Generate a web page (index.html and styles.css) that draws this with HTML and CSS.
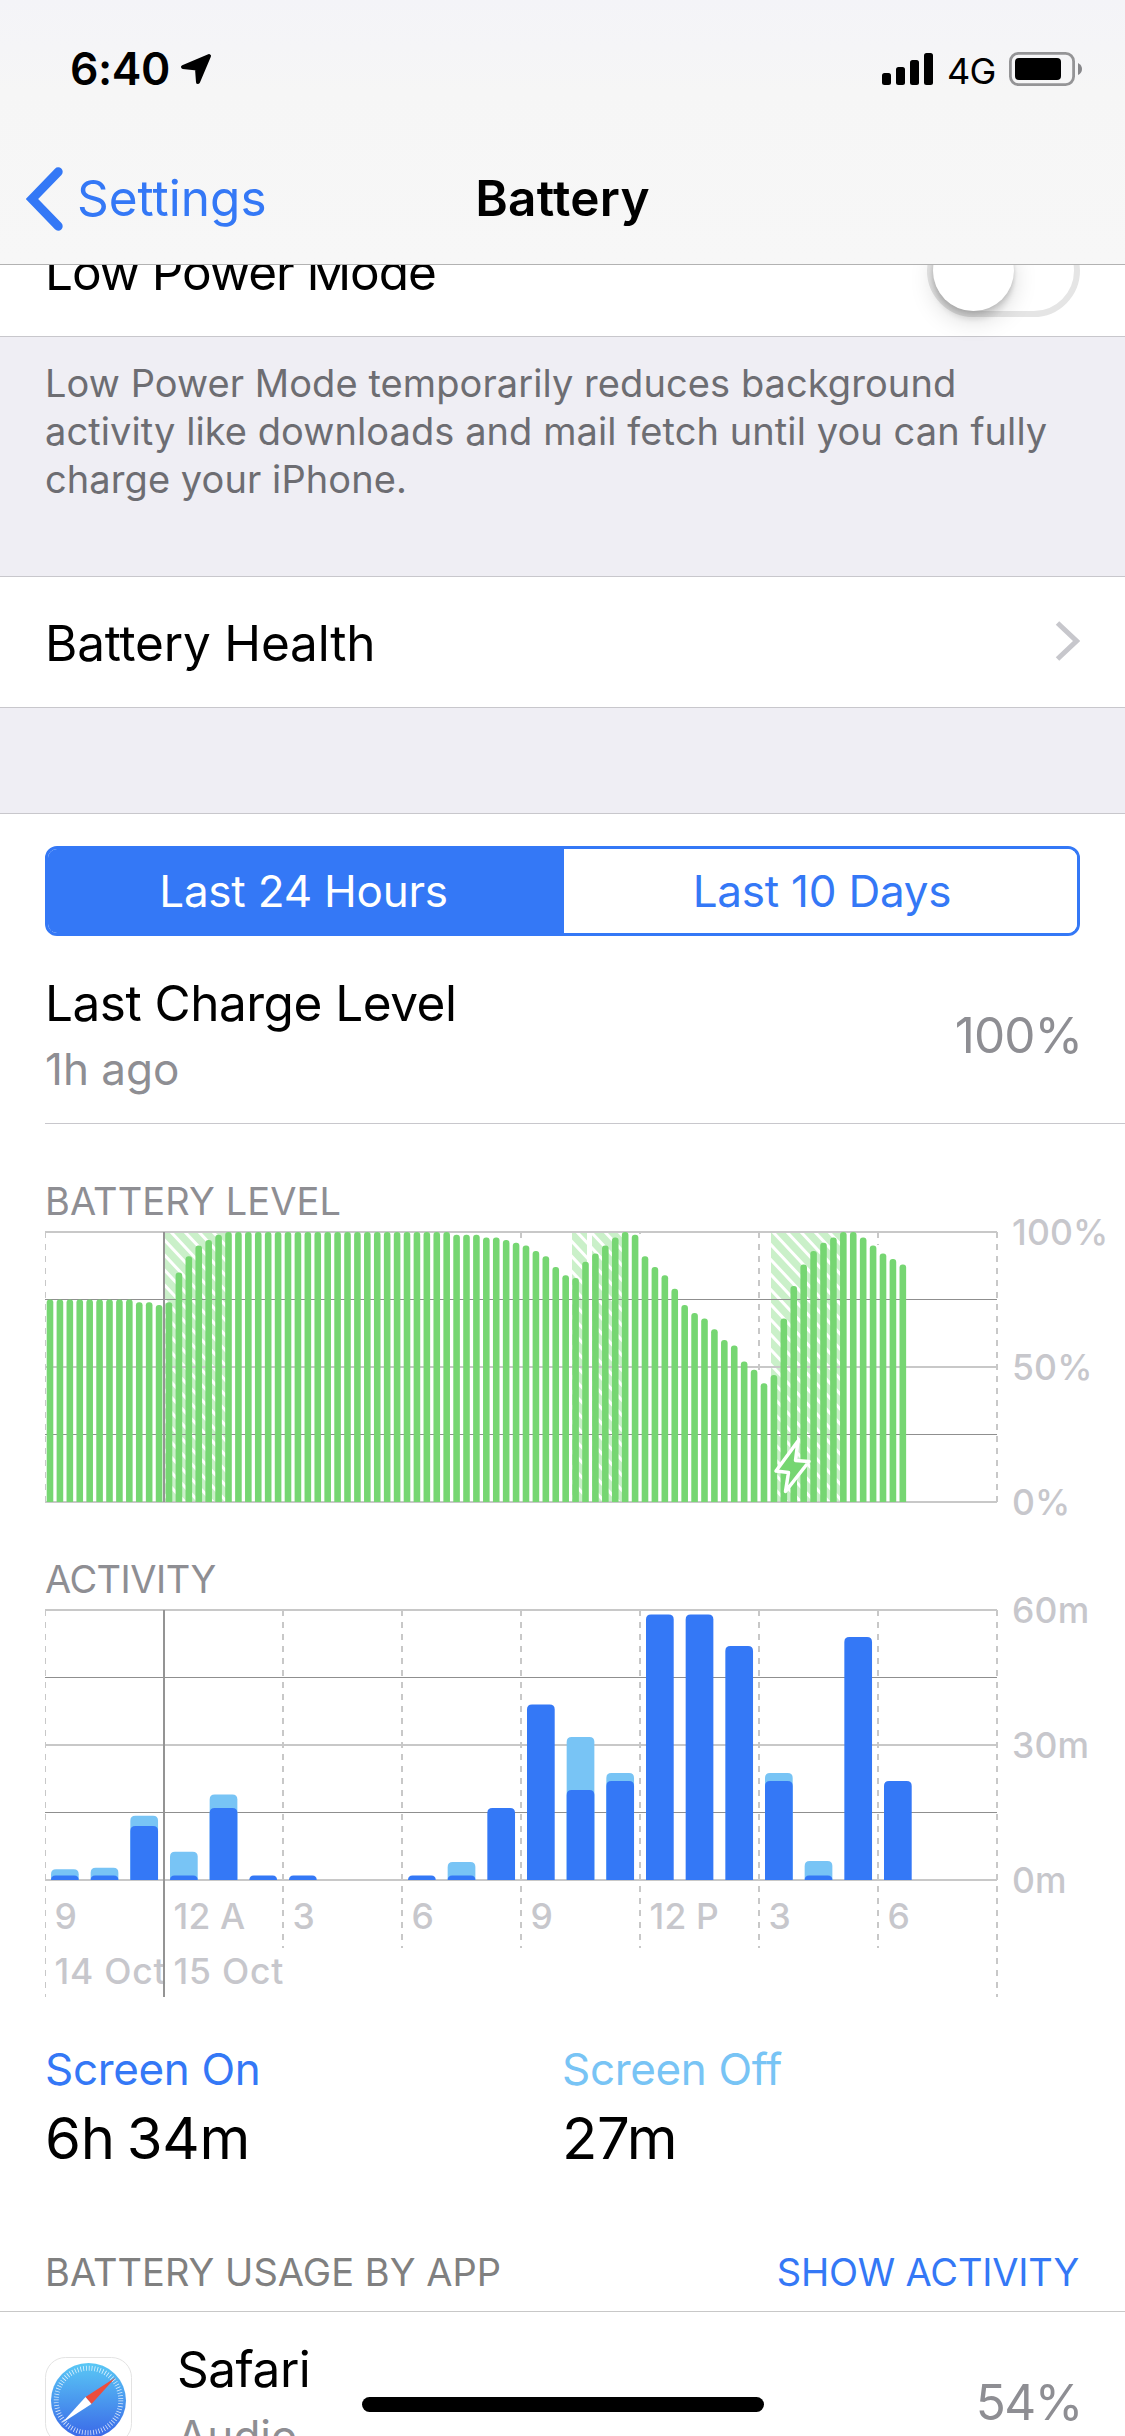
FILE: index.html
```html
<!DOCTYPE html>
<html lang="en">
<head>
    <meta charset="UTF-8">
    <meta name="viewport" content="width=device-width, initial-scale=1.0">
    <title>Battery</title>
    <link rel="stylesheet" href="styles.css">
</head>
<body>
    <header class="header">
        <div class="status-bar">
            <span class="time">6:40</span>
            <svg class="location" width="32" height="32" viewBox="0 0 32 32">
                <path d="M29 3 L3 14 L17 15.5 L18 29 Z" stroke="#000" stroke-width="4" stroke-linejoin="round" />
            </svg>
            <svg class="signal" width="51" height="32" viewBox="0 0 51 32">
                <rect x="0" y="20" width="9" height="12" rx="2.5" />
                <rect x="14" y="14" width="9" height="18" rx="2.5" />
                <rect x="28" y="7" width="9" height="25" rx="2.5" />
                <rect x="42" y="0" width="9" height="32" rx="2.5" />
            </svg>
            <span class="network">4G</span>
            <svg class="battery" width="74" height="34" viewBox="0 0 74 34">
                <rect x="1.4" y="1.4" width="63.2" height="31.2" rx="8" fill="none" stroke="#949496" stroke-width="2.8" />
                <rect x="6" y="6" width="46" height="22" rx="4" />
                <path d="M69 11 Q73 13 73 17 Q73 21 69 23 Z" fill="#87878a" />
            </svg>
        </div>
        <nav class="nav-bar">
            <a class="back">
                <svg width="37" height="64" viewBox="0 0 37 64">
                    <path d="M32.2 4.8 L6 32 L32.2 59.2" fill="none" stroke="#3478f6" stroke-width="9" stroke-linecap="round" />
                </svg>
                <span>Settings</span>
            </a>
            <h1>Battery</h1>
        </nav>
    </header>

    <main>
        <div class="row power-row">
            <span class="label">Low Power Mode</span>
            <div class="toggle"><div class="knob"></div></div>
        </div>
        <p class="footnote">Low Power Mode temporarily reduces background<br>activity like downloads and mail fetch until you can fully<br>charge your iPhone.</p>

        <div class="row health-row">
            <span class="label">Battery Health</span>
            <svg class="chevron" width="25" height="40" viewBox="0 0 25 40">
                <path d="M2.5 2 L21.5 20 L2.5 38" fill="none" stroke="#c7c7cc" stroke-width="5" />
            </svg>
        </div>

        <section class="usage">
            <div class="segmented">
                <button class="active">Last 24 Hours</button>
                <button>Last 10 Days</button>
            </div>

            <div class="charge">
                <div>
                    <div class="label">Last Charge Level</div>
                    <div class="sub">1h ago</div>
                </div>
                <span class="value">100%</span>
            </div>

            <h2 class="level-title">BATTERY LEVEL</h2>
            <svg class="chart" id="levelChart" width="1080" height="300" viewBox="0 -7 1080 300">
                <defs>
                    <pattern id="hatch" width="14" height="15" patternUnits="userSpaceOnUse">
                        <rect width="14" height="15" fill="#caf0c9" />
                        <path d="M-7 -7.5 L21 22.5 M-7 7.5 L7 22.5 M7 -7.5 L21 7.5" stroke="#fff" stroke-width="3" />
                    </pattern>
                </defs>
            </svg>

            <h2 class="activity-title">ACTIVITY</h2>
            <svg class="chart" id="activityChart" width="1080" height="400" viewBox="0 -7 1080 400"></svg>

            <div class="totals">
                <div class="total on">
                    <div class="name">Screen On</div>
                    <div class="amount">6h 34m</div>
                </div>
                <div class="total off">
                    <div class="name">Screen Off</div>
                    <div class="amount">27m</div>
                </div>
            </div>

            <div class="apps-header">
                <span>BATTERY USAGE BY APP</span>
                <a>SHOW ACTIVITY</a>
            </div>
            <div class="app">
                <svg class="app-icon" width="87" height="87" viewBox="0 0 87 87">
                    <defs>
                        <linearGradient id="sky" x1="0" y1="0" x2="0" y2="1">
                            <stop offset="0" stop-color="#5ac8f5" />
                            <stop offset="1" stop-color="#3a68e8" />
                        </linearGradient>
                    </defs>
                    <rect x="0.5" y="0.5" width="86" height="86" rx="20" fill="#fff" stroke="#e3e3e3" />
                    <circle cx="43.5" cy="43.5" r="37.5" fill="url(#sky)" />
                    <circle cx="43.5" cy="43.5" r="32.3" fill="none" stroke="#fff" stroke-opacity=".8" stroke-width="5" stroke-dasharray="0.8 2.02" />
                    <path d="M70.5 20.5 L40.5 40 L46.5 47 Z" fill="#eb4d3d" />
                    <path d="M17 66 L40.5 40 L46.5 47 Z" fill="#fff" />
                </svg>
                <div class="app-text">
                    <div class="label">Safari</div>
                    <div class="sub">Audio</div>
                </div>
                <span class="value">54%</span>
            </div>
        </section>
    </main>
    <div class="home-indicator"></div>

    <script src="charts.js"></script>
</body>
</html>
```
FILE: styles.css
```css
* {
    box-sizing: border-box;
}
body {
    margin: 0;
    width: 1125px;
    height: 2436px;
    overflow: hidden;
    background: #efeef4;
    font-family: Inter, "Liberation Sans", sans-serif;
    font-size: 49.5px;
    letter-spacing: -0.01em;
    color: #000;
}
h1, h2, p {
    margin: 0;
}

/* header */
.header {
    position: fixed;
    top: 0;
    left: 0;
    z-index: 2;
    width: 1125px;
    height: 265px;
    background: linear-gradient(#f4f4f8, #f6f6f6 35%, #f7f7f7);
    border-bottom: 1px solid #b2b2b2;
}
.status-bar {
    display: flex;
    align-items: center;
    height: 138px;
    padding: 0 42px 0 70px;
}
.time {
    width: 110px;
    font-size: 44.5px;
    font-weight: 600;
    letter-spacing: -0.01em;
}
.signal {
    margin-left: auto;
}
.network {
    width: 61px;
    margin-left: 14px;
    padding-top: 3px;
    font-size: 36px;
    letter-spacing: -0.02em;
}
.battery {
    margin-left: 1px;
}
.nav-bar {
    display: grid;
    grid-template-columns: 1fr auto 1fr;
    align-items: center;
    height: 121px;
    padding: 0 26px;
}
.back {
    display: flex;
    align-items: center;
    gap: 14px;
    color: #3478f6;
    letter-spacing: 0;
}
.back span, h1 {
    padding-bottom: 2px;
}
h1 {
    font-size: 49.5px;
    font-weight: 600;
    letter-spacing: 0.005em;
}

/* list rows */
main {
    padding-top: 204px;
}
.row {
    display: flex;
    align-items: center;
    justify-content: space-between;
    padding: 0 45px;
    background: #fff;
    border-bottom: 1px solid #c8c7cc;
}
.power-row {
    height: 133px;
}
.power-row .label {
    padding-top: 4px;
    letter-spacing: -0.022em;
}
.toggle {
    width: 153px;
    height: 93px;
    border: 6px solid #e5e5e5;
    border-radius: 47px;
}
.knob {
    width: 81px;
    height: 81px;
    border-radius: 50%;
    background: #fff;
    box-shadow: 0 9px 24px rgba(0, 0, 0, .15), 0 9px 5px rgba(0, 0, 0, .08), 0 2px 4px rgba(0, 0, 0, .12);
}
.footnote {
    height: 239px;
    padding: 22px 45px 0;
    font-size: 38px;
    line-height: 48px;
    letter-spacing: 0.002em;
    color: #6d6d72;
}
.health-row {
    height: 132px;
    border-top: 1px solid #c8c7cc;
}
.health-row .label {
    padding-top: 2px;
    letter-spacing: -0.004em;
}
.chevron {
    margin-bottom: 2px;
}

/* usage */
.usage {
    margin-top: 105px;
    padding-top: 32px;
    background: #fff;
    border-top: 1px solid #c8c7cc;
}
.segmented {
    display: flex;
    height: 90px;
    margin: 0 45px;
    border: 3px solid #3478f6;
    border-radius: 12px;
    overflow: hidden;
}
.segmented button {
    flex: 1;
    padding: 0 0 0 3px;
    border: 0;
    background: #fff;
    color: #3478f6;
    font-family: inherit;
    font-size: 44px;
    letter-spacing: -0.005em;
}
.segmented .active {
    flex: 0 0 516px;
    padding: 0 5px 0 0;
    background: #3478f6;
    color: #fff;
}
.charge {
    display: flex;
    align-items: center;
    justify-content: space-between;
    height: 188px;
    margin-left: 45px;
    padding: 12px 45px 0 0;
    line-height: 66px;
    border-bottom: 1px solid #c8c7cc;
}
.sub {
    font-size: 44px;
    letter-spacing: 0;
    color: #8e8e93;
}
.value {
    margin-right: -2px;
    padding-bottom: 1px;
    letter-spacing: -0.02em;
    color: #8e8e93;
}
h2 {
    padding: 0 45px;
    font-size: 38px;
    font-weight: 400;
    line-height: 48px;
    color: #8e8e93;
}
.level-title {
    margin-top: 53px;
    letter-spacing: 0.003em;
}
.activity-title {
    margin-top: 30px;
    letter-spacing: -0.014em;
}
.chart {
    display: block;
    margin-left: 45px;
    overflow: visible;
}
.major {
    stroke: #c8c8c8;
    stroke-width: 2;
}
.minor {
    stroke: #8f8f8f;
    stroke-width: 1;
}
.hour {
    stroke: #c8c8c8;
    stroke-width: 2;
    stroke-dasharray: 6 6;
}
.first {
    stroke-width: 1;
}
.midnight {
    stroke: #949494;
    stroke-width: 2;
}
.axis {
    fill: #c7c7cc;
    font-size: 35.5px;
    font-weight: 500;
    letter-spacing: 0.005em;
}
.date {
    letter-spacing: 0.022em;
}
.level-bar {
    fill: #76d672;
}
.bolt {
    fill: #76d672;
    stroke: #fff;
    stroke-width: 3.5;
    stroke-linejoin: round;
}
.screen-on {
    fill: #3478f6;
}
.screen-off {
    fill: #78c4f5;
}
.totals {
    display: grid;
    grid-template-columns: 517px 1fr;
    margin-top: 36px;
    padding: 0 45px;
}
.name {
    font-size: 44px;
    line-height: 60px;
    letter-spacing: -0.008em;
}
.on .name {
    color: #3478f6;
}
.off .name {
    color: #78c4f5;
}
.amount {
    font-size: 58px;
    line-height: 78px;
    letter-spacing: -0.005em;
    word-spacing: -4px;
}
.apps-header {
    display: flex;
    justify-content: space-between;
    margin-top: 71px;
    padding: 0 46px 15px 45px;
    font-size: 38px;
    line-height: 48px;
    letter-spacing: 0.001em;
    color: #808080;
    border-bottom: 1px solid #c8c8c8;
}
.apps-header a {
    color: #3478f6;
    letter-spacing: -0.005em;
}
.app {
    display: flex;
    align-items: center;
    height: 182px;
    padding: 0 45px;
    line-height: 67px;
}
.app-icon {
    margin-bottom: 6px;
}
.app-text {
    margin-left: 45px;
}
.app .value {
    margin-left: auto;
    letter-spacing: -0.03em;
}
.home-indicator {
    position: fixed;
    left: 362px;
    bottom: 24px;
    width: 402px;
    height: 15px;
    border-radius: 8px;
    background: #000;
}
```
FILE: charts.js
```js
const WIDTH = 952;
const HEIGHT = 270;

const levels = [
    75, 75, 75, 75, 75, 75, 75, 75, 75, 74, 74, 73,
    74, 85, 91, 95, 97, 99, 100, 100, 100, 100, 100, 100,
    100, 100, 100, 100, 100, 100, 100, 100, 100, 100, 100, 100,
    100, 100, 100, 100, 100, 99, 99, 99, 98, 98, 97, 96,
    95, 93, 91, 87, 84, 83, 89, 92, 95, 98, 100, 99,
    91, 87, 84, 79, 73, 70, 68, 64, 60, 58, 52, 49,
    44, 47, 68, 80, 88, 93, 96, 98, 100, 100, 98, 95,
    92, 90, 88
];

// [start, end] of each charging period
const charging = [[120, 181], [527, 542], [547, 578], [726, 796]];

// [minutes on, minutes on + off] for each hour
const activity = [
    [1, 2.4], [1, 2.7], [12, 14.3], [1, 6.3], [16, 19], [1, 1], [1, 1], [0, 0],
    [0, 0], [1, 1], [1, 4], [16, 16], [39, 39], [20, 31.8], [22, 23.8], [59, 59],
    [59, 59], [52, 52], [22, 23.8], [1, 4.2], [54, 54], [22, 22]
];

function line(x1, y1, x2, y2, cls) {
    return `<line x1="${x1}" y1="${y1}" x2="${x2}" y2="${y2}" class="${cls}" />`;
}

function text(x, y, str, cls = "axis") {
    return `<text x="${x}" y="${y}" class="${cls}">${str}</text>`;
}

function grid(labels) {
    let out = "";
    for (let i = 0; i < 5; i++) {
        const y = i * HEIGHT / 4;
        out += line(0, y, WIDTH, y, i % 2 ? "minor" : "major");
    }
    labels.forEach((label, i) => {
        out += text(967, i * HEIGHT / 2 + 12.7, label);
    });
    return out;
}

// bar with only the top corners rounded
function bar(x, w, h, r, cls) {
    r = Math.min(r, h);
    return `<path d="M${x} ${HEIGHT} v${r - h} q0 ${-r} ${r} ${-r} h${w - 2 * r} q${r} 0 ${r} ${r} v${h - r} z" class="${cls}" />`;
}

function drawLevel() {
    let out = charging.map(([from, to]) => `<rect x="${from}" y="0" width="${to - from}" height="${HEIGHT}" fill="url(#hatch)" />`).join("");
    out += grid(["100%", "50%", "0%"]);
    // the hour lines stop where the bars begin
    out += line(0.5, 0, 0.5, HEIGHT, "hour first");
    [[476, 6], [595, 2], [714, 138], [833, 13], [952, 270]].forEach(([x, y]) => {
        out += line(x, 0, x, y, "hour");
    });
    out += line(119, 0, 119, HEIGHT, "midnight");
    const step = WIDTH / 96;
    levels.forEach((level, i) => {
        out += bar(i * step + 1.7, 6.6, level * HEIGHT / 100, 3, "level-bar");
    });
    out += `<path class="bolt" d="M753 209 L731 239 L743.5 240.5 L740.5 259.5 L764 229.5 L750.5 228.5 Z" />`;
    document.getElementById("levelChart").innerHTML += out;
}

function drawActivity() {
    let out = grid(["60m", "30m", "0m"]);
    const hours = ["9", "12 A", "3", "6", "9", "12 P", "3", "6"];
    out += line(0.5, 0, 0.5, 387, "hour first");
    hours.forEach((label, i) => {
        if (i > 0) out += line(i * 119, 0, i * 119, 338, "hour");
        out += text(i * 119 + 9.5, 319, label);
    });
    out += line(WIDTH, 0, WIDTH, 387, "hour");
    out += text(9.5, 374, "14 Oct", "axis date") + text(128.5, 374, "15 Oct", "axis date");
    out += line(119, 0, 119, 387, "midnight");
    const step = WIDTH / 24;
    activity.forEach(([on, total], i) => {
        if (total > on) out += bar(i * step + 6, 27.7, total * HEIGHT / 60, 5, "screen-off");
        if (on > 0) out += bar(i * step + 6, 27.7, on * HEIGHT / 60, 5, "screen-on");
    });
    document.getElementById("activityChart").innerHTML = out;
}

drawLevel();
drawActivity();
```
